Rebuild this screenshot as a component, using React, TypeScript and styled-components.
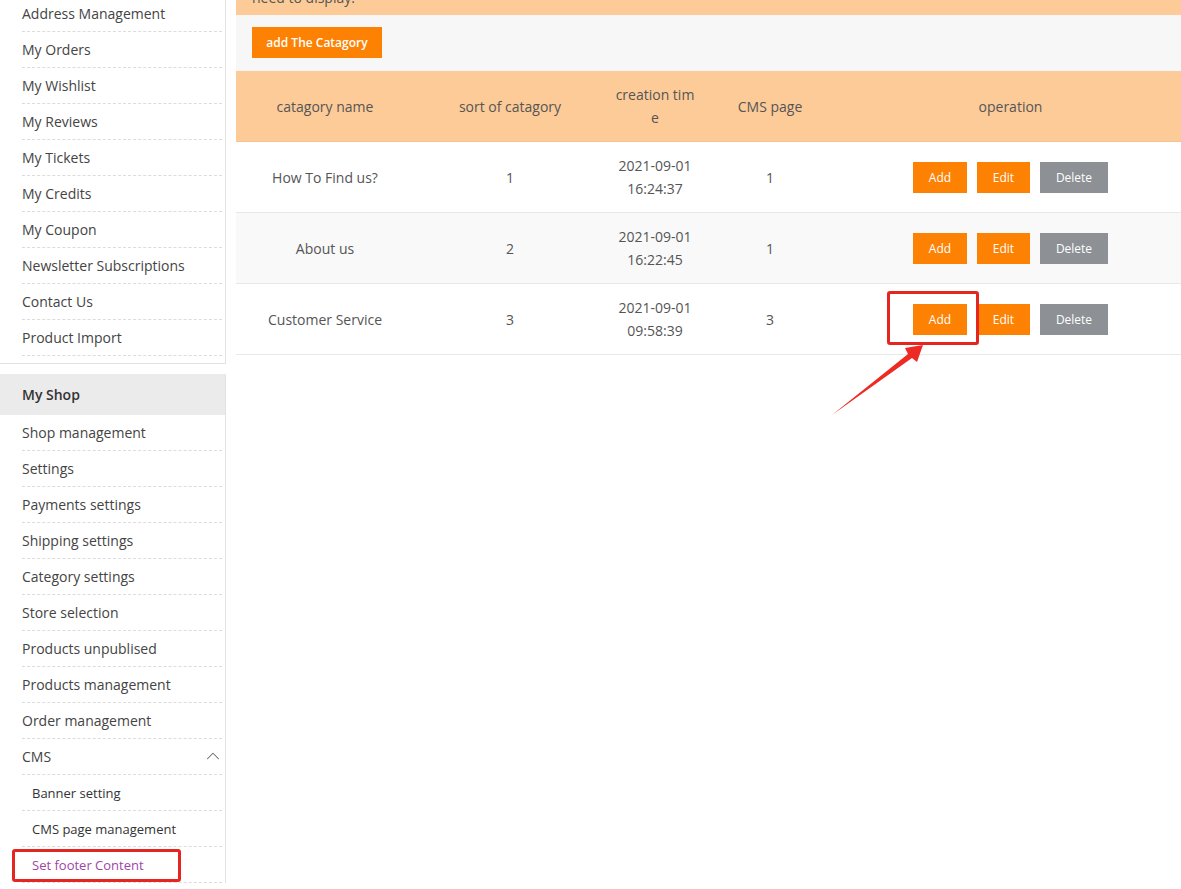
import React from 'react';
import styled, { createGlobalStyle } from 'styled-components';
import { ChevronUp } from 'lucide-react';

const GlobalStyle = createGlobalStyle`
  html, body {
    margin: 0;
    padding: 0;
    background: #fff;
    overflow: hidden;
  }
  body {
    font-family: "Open Sans", "Noto Sans", Arial, sans-serif;
    color: #444;
  }
`;

type Row = { name: string; sort: number; date: string; time: string; pages: number };

const rows: Row[] = [
  { name: 'How To Find us?', sort: 1, date: '2021-09-01', time: '16:24:37', pages: 1 },
  { name: 'About us', sort: 2, date: '2021-09-01', time: '16:22:45', pages: 1 },
  { name: 'Customer Service', sort: 3, date: '2021-09-01', time: '09:58:39', pages: 3 },
];

const accountLinks = [
  'Address Management',
  'My Orders',
  'My Wishlist',
  'My Reviews',
  'My Tickets',
  'My Credits',
  'My Coupon',
  'Newsletter Subscriptions',
  'Contact Us',
  'Product Import',
];

const shopLinks = [
  'Shop management',
  'Settings',
  'Payments settings',
  'Shipping settings',
  'Category settings',
  'Store selection',
  'Products unpublised',
  'Products management',
  'Order management',
];

const App: React.FC = () => {
  return (
    <>
      <GlobalStyle />
      <Page>
        <Sidebar>
          <MenuBox $first>
            {accountLinks.map((label) => (
              <MenuItem key={label}>{label}</MenuItem>
            ))}
          </MenuBox>

          <MenuBox>
            <MenuHeader>My Shop</MenuHeader>
            {shopLinks.map((label) => (
              <MenuItem key={label}>{label}</MenuItem>
            ))}
            <MenuItem>
              CMS
              <Chevron>
                <ChevronUp size={22} strokeWidth={1.1} />
              </Chevron>
            </MenuItem>
            <SubItem>Banner setting</SubItem>
            <SubItem>CMS page management</SubItem>
            <SubItem $active>
              Set footer Content
              <SideMark />
            </SubItem>
          </MenuBox>
        </Sidebar>

        <Main>
          <Notice>
            Set the footer category and the CMS pages which you
            <br />
            need to display.
          </Notice>

          <Toolbar>
            <PrimaryButton>add The Catagory</PrimaryButton>
          </Toolbar>

          <Table>
            <colgroup>
              <col style={{ width: 178 }} />
              <col style={{ width: 192 }} />
              <col style={{ width: 98 }} />
              <col style={{ width: 132 }} />
              <col />
            </colgroup>
            <thead>
              <tr>
                <Th>catagory name</Th>
                <Th>sort of catagory</Th>
                <Th $breakAll>creation time</Th>
                <Th>CMS page</Th>
                <Th $shift>operation</Th>
              </tr>
            </thead>
            <tbody>
              {rows.map((row, i) => (
                <Tr key={row.name} $striped={i % 2 === 1}>
                  <Td>{row.name}</Td>
                  <Td>{row.sort}</Td>
                  <Td>
                    {row.date}
                    <br />
                    {row.time}
                  </Td>
                  <Td>{row.pages}</Td>
                  <Td>
                    <Actions>
                      <ActionWrap>
                        <ActionButton $w={54}>Add</ActionButton>
                        {i === 2 && <TableMark />}
                      </ActionWrap>
                      <ActionButton $w={53}>Edit</ActionButton>
                      <ActionButton $w={68} $variant="grey">
                        Delete
                      </ActionButton>
                    </Actions>
                  </Td>
                </Tr>
              ))}
            </tbody>
          </Table>
        </Main>

        <Arrow width="120" height="90" viewBox="820 335 120 90">
          <polygon
            points="832,415 908,354 905,348 923,345 917,362 912,358"
            fill="#ee2a24"
          />
        </Arrow>
      </Page>
    </>
  );
};

const Page = styled.div`
  position: relative;
  display: grid;
  grid-template-columns: 226px 1fr;
  column-gap: 10px;
  height: 889px;
  overflow: hidden;
`;

const Sidebar = styled.aside`
  display: flex;
  flex-direction: column;
  gap: 10px;
  margin-top: -4px;
`;

const MenuBox = styled.div<{ $first?: boolean }>`
  background: #fff;
  border-right: 1px solid #e2e2e2;
  border-bottom: ${({ $first }) => ($first ? '1px solid #e2e2e2' : 'none')};
  border-top: ${({ $first }) => ($first ? 'none' : '1px solid #ececec')};
  padding-bottom: ${({ $first }) => ($first ? '7px' : '0')};
`;

const MenuHeader = styled.div`
  height: 40px;
  line-height: 40px;
  padding-left: 22px;
  background: #ebebeb;
  font-size: 14px;
  font-weight: 600;
  color: #333;
`;

const MenuItem = styled.div`
  position: relative;
  display: flex;
  align-items: center;
  height: 35px;
  margin: 0 3px 0 22px;
  border-bottom: 1px dashed #dcdcdc;
  font-size: 14px;
  color: #444;
`;

const SubItem = styled.div<{ $active?: boolean }>`
  position: relative;
  display: flex;
  align-items: center;
  height: 35px;
  margin: 0 3px 0 22px;
  padding-left: 10px;
  border-bottom: 1px dashed #dcdcdc;
  font-size: 13px;
  color: ${({ $active }) => ($active ? '#a044a6' : '#333')};
`;

const Chevron = styled.span`
  position: absolute;
  right: -2px;
  top: 6px;
  display: flex;
  color: #666;
`;

const SideMark = styled.span`
  position: absolute;
  left: -10px;
  top: 2px;
  width: 163px;
  height: 27px;
  border: 3px solid #e52620;
  border-radius: 3px;
`;

const Main = styled.main`
  display: flex;
  flex-direction: column;
  min-width: 0;
`;

const Notice = styled.div`
  margin-top: -41px;
  padding: 6px 16px;
  background: #fdcb98;
  font-size: 14px;
  line-height: 22px;
  color: #555;
`;

const Toolbar = styled.div`
  padding: 12px 16px;
  background: #f7f7f7;
  border-bottom: 1px solid #f3f4f8;
`;

const PrimaryButton = styled.button`
  width: 130px;
  height: 31px;
  border: none;
  background: #fd8204;
  color: #fff;
  font-family: inherit;
  font-size: 12px;
  font-weight: 600;
  cursor: pointer;
`;

const Table = styled.table`
  width: 100%;
  table-layout: fixed;
  border-collapse: collapse;
  font-size: 14px;
  color: #555;
`;

const Th = styled.th<{ $breakAll?: boolean; $shift?: boolean }>`
  height: 70px;
  padding: 0 8px;
  padding-left: ${({ $shift }) => ($shift ? '12px' : '8px')};
  background: #fdcb98;
  font-weight: 400;
  line-height: 23px;
  text-align: center;
  word-break: ${({ $breakAll }) => ($breakAll ? 'break-all' : 'normal')};
  border-bottom: 1px solid #f4c391;
`;

const Tr = styled.tr<{ $striped: boolean }>`
  background: ${({ $striped }) => ($striped ? '#f9f9f9' : '#fff')};
  border-bottom: 1px solid #e8e8e8;
`;

const Td = styled.td`
  height: 70px;
  padding: 0 8px;
  line-height: 23px;
  text-align: center;
`;

const Actions = styled.div`
  display: flex;
  justify-content: center;
  gap: 10px;
  padding-left: 4px;
`;

const ActionWrap = styled.span`
  position: relative;
  display: flex;
`;

const ActionButton = styled.button<{ $variant?: 'orange' | 'grey'; $w: number }>`
  width: ${({ $w }) => $w}px;
  height: 31px;
  padding: 0;
  border: none;
  background: ${({ $variant }) => ($variant === 'grey' ? '#8d9095' : '#fd8204')};
  color: #fff;
  font-family: inherit;
  font-size: 12px;
  font-weight: 500;
  cursor: pointer;
`;

const TableMark = styled.span`
  position: absolute;
  left: -26px;
  top: -13px;
  width: 86px;
  height: 48px;
  border: 3px solid #e52620;
  border-radius: 3px;
  pointer-events: none;
`;

const Arrow = styled.svg`
  position: absolute;
  left: 820px;
  top: 335px;
`;

export default App;
